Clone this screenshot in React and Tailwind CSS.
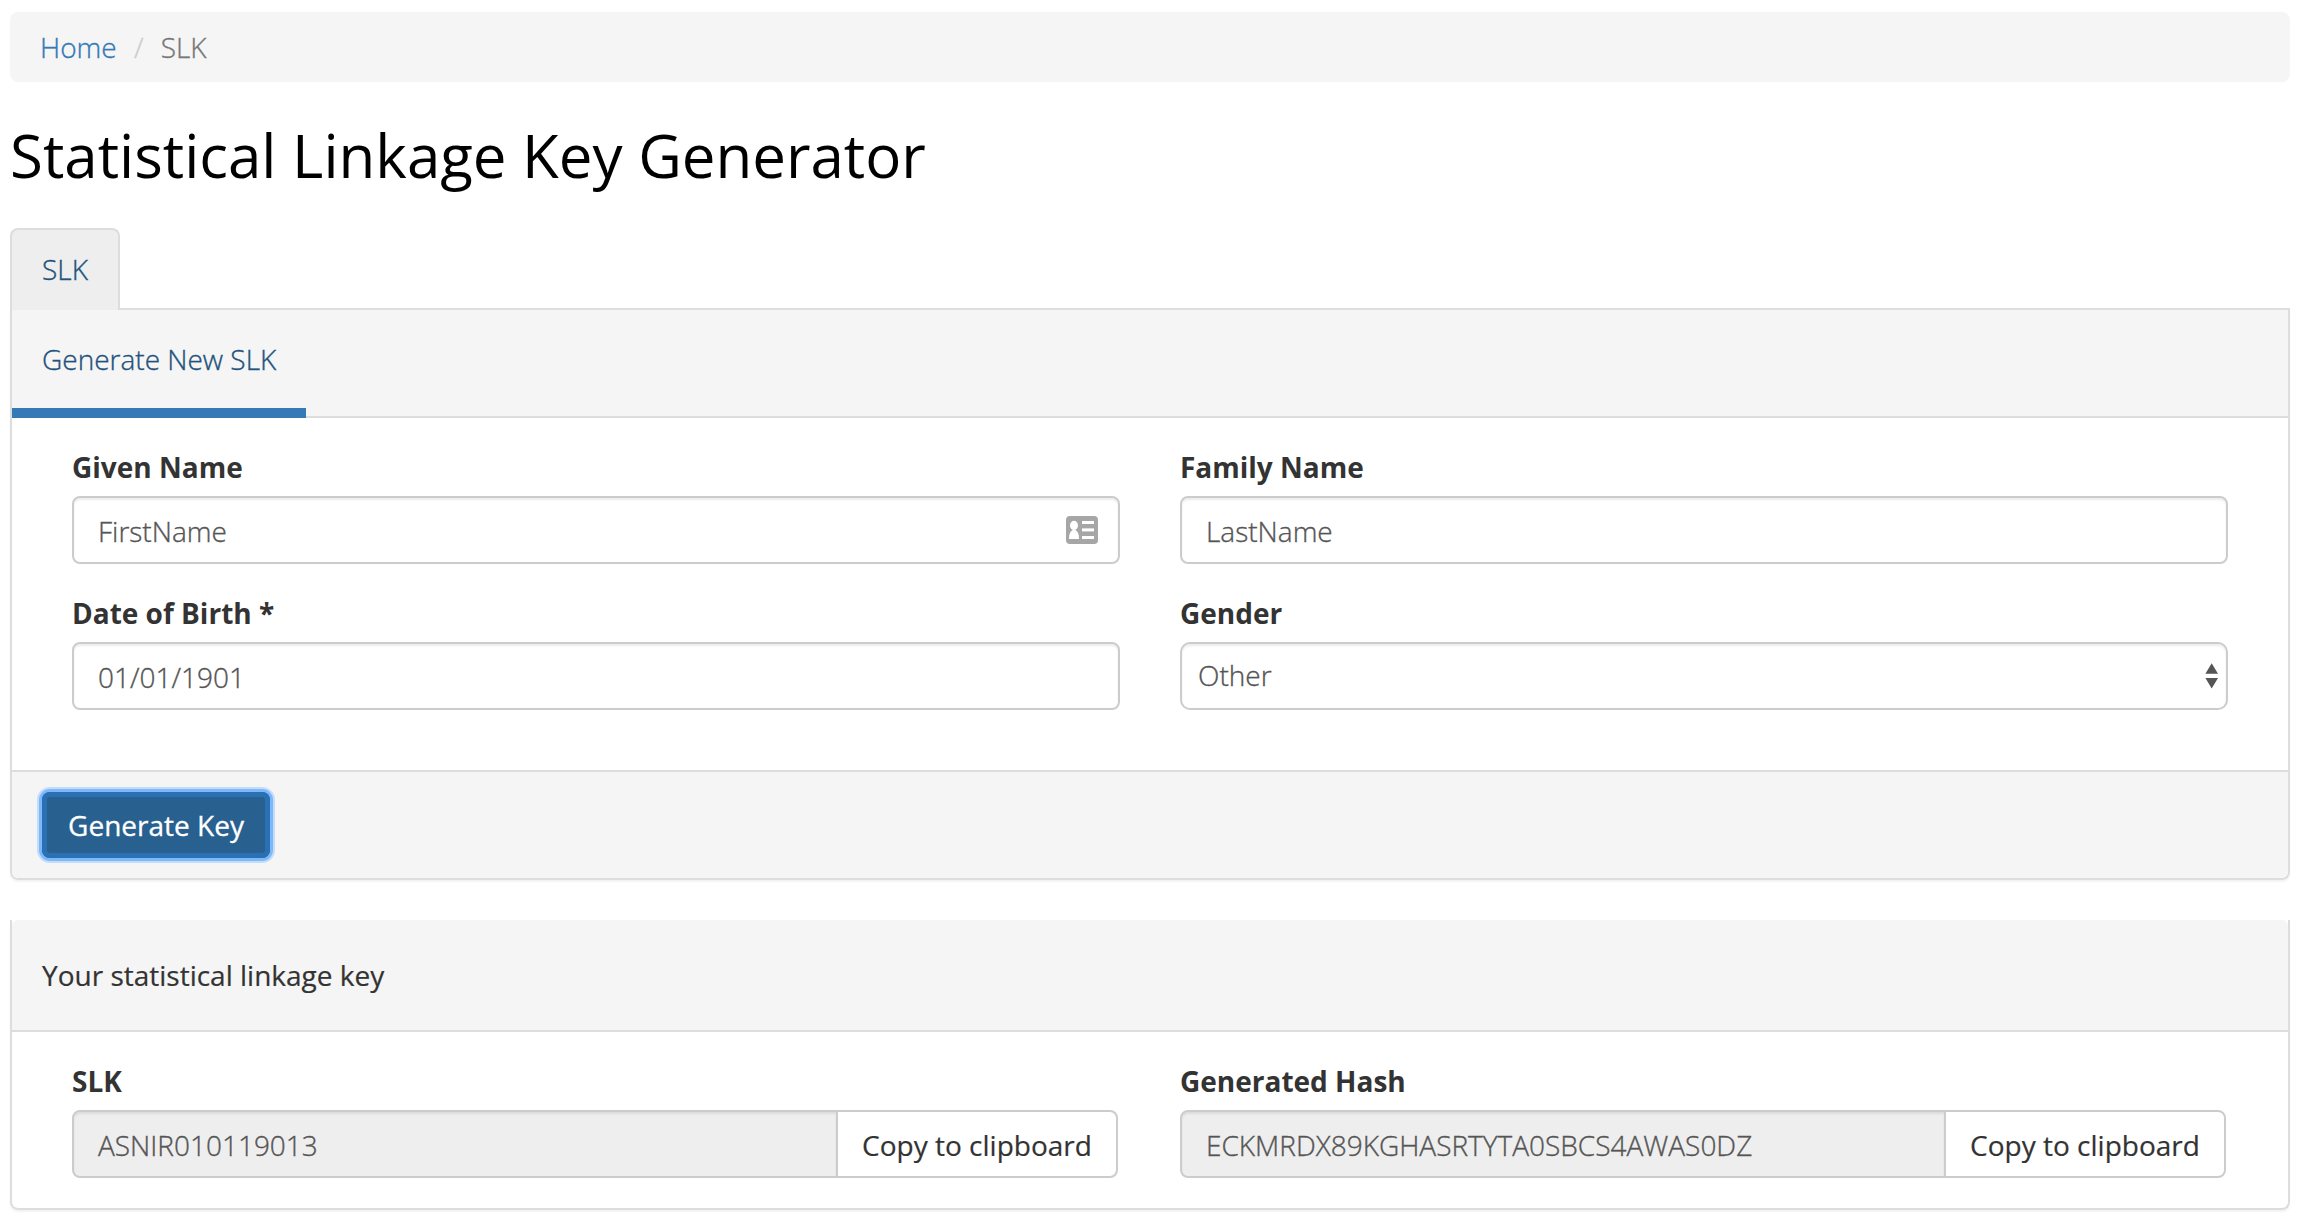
const lightText = 'font-light [-webkit-text-stroke:0.35px_currentColor]';

const controlBase =
  'flex h-[68px] items-center border-2 border-[#ccc] text-[#555] font-light [-webkit-text-stroke:0.35px_currentColor] shadow-[inset_0_2px_2px_rgba(0,0,0,0.075)]';

function Field({ label, children }) {
  return (
    <div className="min-w-0">
      <div className="mb-[10px] font-bold">{label}</div>
      {children}
    </div>
  );
}

function TextBox({ value, icon }) {
  return (
    <div className={`${controlBase} justify-between rounded-lg bg-white pl-[24px] pr-[20px] pt-[2px]`}>
      <span>{value}</span>
      {icon}
    </div>
  );
}

function ContactCardIcon() {
  return (
    <svg className="mb-[3px] h-[28px] w-[32px]" viewBox="0 0 32 28">
      <rect width="32" height="28" rx="4" fill="#a6a6a6" />
      <g fill="#fff">
        <ellipse cx="8" cy="9.4" rx="4" ry="4.6" />
        <path d="M3 23c0-5 1-7 3.6-9h2.8C12 16 13 18 13 23z" />
        <rect x="16" y="5" width="12" height="3" />
        <rect x="16" y="12.4" width="12" height="3" />
        <rect x="16" y="20" width="12" height="3" />
      </g>
    </svg>
  );
}

function CopyField({ label, value }) {
  return (
    <Field label={label}>
      <div className="mr-[2px] flex">
        <div className={`${controlBase} min-w-0 flex-1 rounded-l-lg bg-[#eee] pl-[24px] pt-[2px]`}>{value}</div>
        <button className="-ml-[2px] h-[68px] w-[282px] rounded-r-lg border-2 border-[#ccc] bg-white pt-[2px] [-webkit-text-stroke:0.2px_currentColor]">
          Copy to clipboard
        </button>
      </div>
    </Field>
  );
}

export default function App() {
  return (
    <div className="h-[1220px] w-[2300px] overflow-hidden bg-white px-[10px] pt-[12px] font-['Open_Sans',sans-serif] text-[28px] leading-[38px] text-[#333]">
      <nav className={`${lightText} flex h-[70px] rounded-lg bg-[#f5f5f5] px-[30px] py-[16px]`}>
        <a className="text-[#337ab7]">Home</a>
        <span className="w-[44px] text-center text-[#ccc]">/</span>
        <span className="text-[#777]">SLK</span>
      </nav>

      <h1 className="mt-[32px] mb-[32px] text-[60px] leading-[82px] text-black">Statistical Linkage Key Generator</h1>

      <div className="relative flex">
        <div
          className={`${lightText} -mb-[2px] h-[82px] w-[110px] rounded-t-lg border-2 border-b-0 border-[#ddd] bg-[#eee] pl-[30px] pt-[20px] text-[#23527c]`}
        >
          SLK
        </div>
      </div>

      <section className="rounded-b-lg border-2 border-t-0 border-[#ddd] shadow-[0_2px_2px_rgba(0,0,0,0.05)]">
        <div className="-mr-[2px] ml-[106px] h-[2px] bg-[#ddd]" />
        <div className="flex h-[108px] border-b-2 border-[#ddd] bg-[#f5f5f5]">
          <div
            className={`${lightText} -mb-[2px] w-[294px] border-b-[10px] border-[#337ab7] pl-[30px] pt-[30px] text-[#23527c]`}
          >
            Generate New SLK
          </div>
        </div>
        <div className="grid grid-cols-2 gap-x-[60px] gap-y-[30px] px-[60px] pt-[30px] pb-[60px]">
          <Field label="Given Name">
            <TextBox value="FirstName" icon={<ContactCardIcon />} />
          </Field>
          <Field label="Family Name">
            <TextBox value="LastName" />
          </Field>
          <Field label="Date of Birth *">
            <TextBox value="01/01/1901" />
          </Field>
          <Field label="Gender">
            <div className={`${controlBase} justify-between rounded-[10px] bg-white pl-[16px] pr-[7px]`}>
              <span className="pb-[2px]">Other</span>
              <svg className="h-[26px] w-[14px]" viewBox="0 0 14 26" fill="#555">
                <path d="M6.7 0.3l6.3 10.4H.4zM6.7 25.4l6.3-10.4H.4z" />
              </svg>
            </div>
          </Field>
        </div>
        <div className="h-[108px] rounded-b-[6px] border-t-2 border-[#ddd] bg-[#f5f5f5] pl-[30px] pt-[20px]">
          <button className="h-[66px] w-[228px] rounded-[8px] bg-[#286090] text-white [-webkit-text-stroke:0.3px_currentColor] shadow-[inset_0_0_0_5px_#2b70b3,0_0_0_3px_#7db8fa,0_0_0_5px_#c3dcf8]">
            Generate Key
          </button>
        </div>
      </section>

      <section className="mt-[40px] rounded-b-lg border-2 border-t-0 border-[#ddd] shadow-[0_2px_2px_rgba(0,0,0,0.05)]">
        <div className="h-[112px] rounded-t-[6px] border-b-2 border-[#ddd] bg-[#f5f5f5] pl-[30px] pt-[36px] [-webkit-text-stroke:0.2px_currentColor]">
          Your statistical linkage key
        </div>
        <div className="grid grid-cols-2 gap-x-[60px] px-[60px] py-[30px]">
          <CopyField label="SLK" value="ASNIR010119013" />
          <CopyField label="Generated Hash" value="ECKMRDX89KGHASRTYTA0SBCS4AWAS0DZ" />
        </div>
      </section>
    </div>
  );
}
